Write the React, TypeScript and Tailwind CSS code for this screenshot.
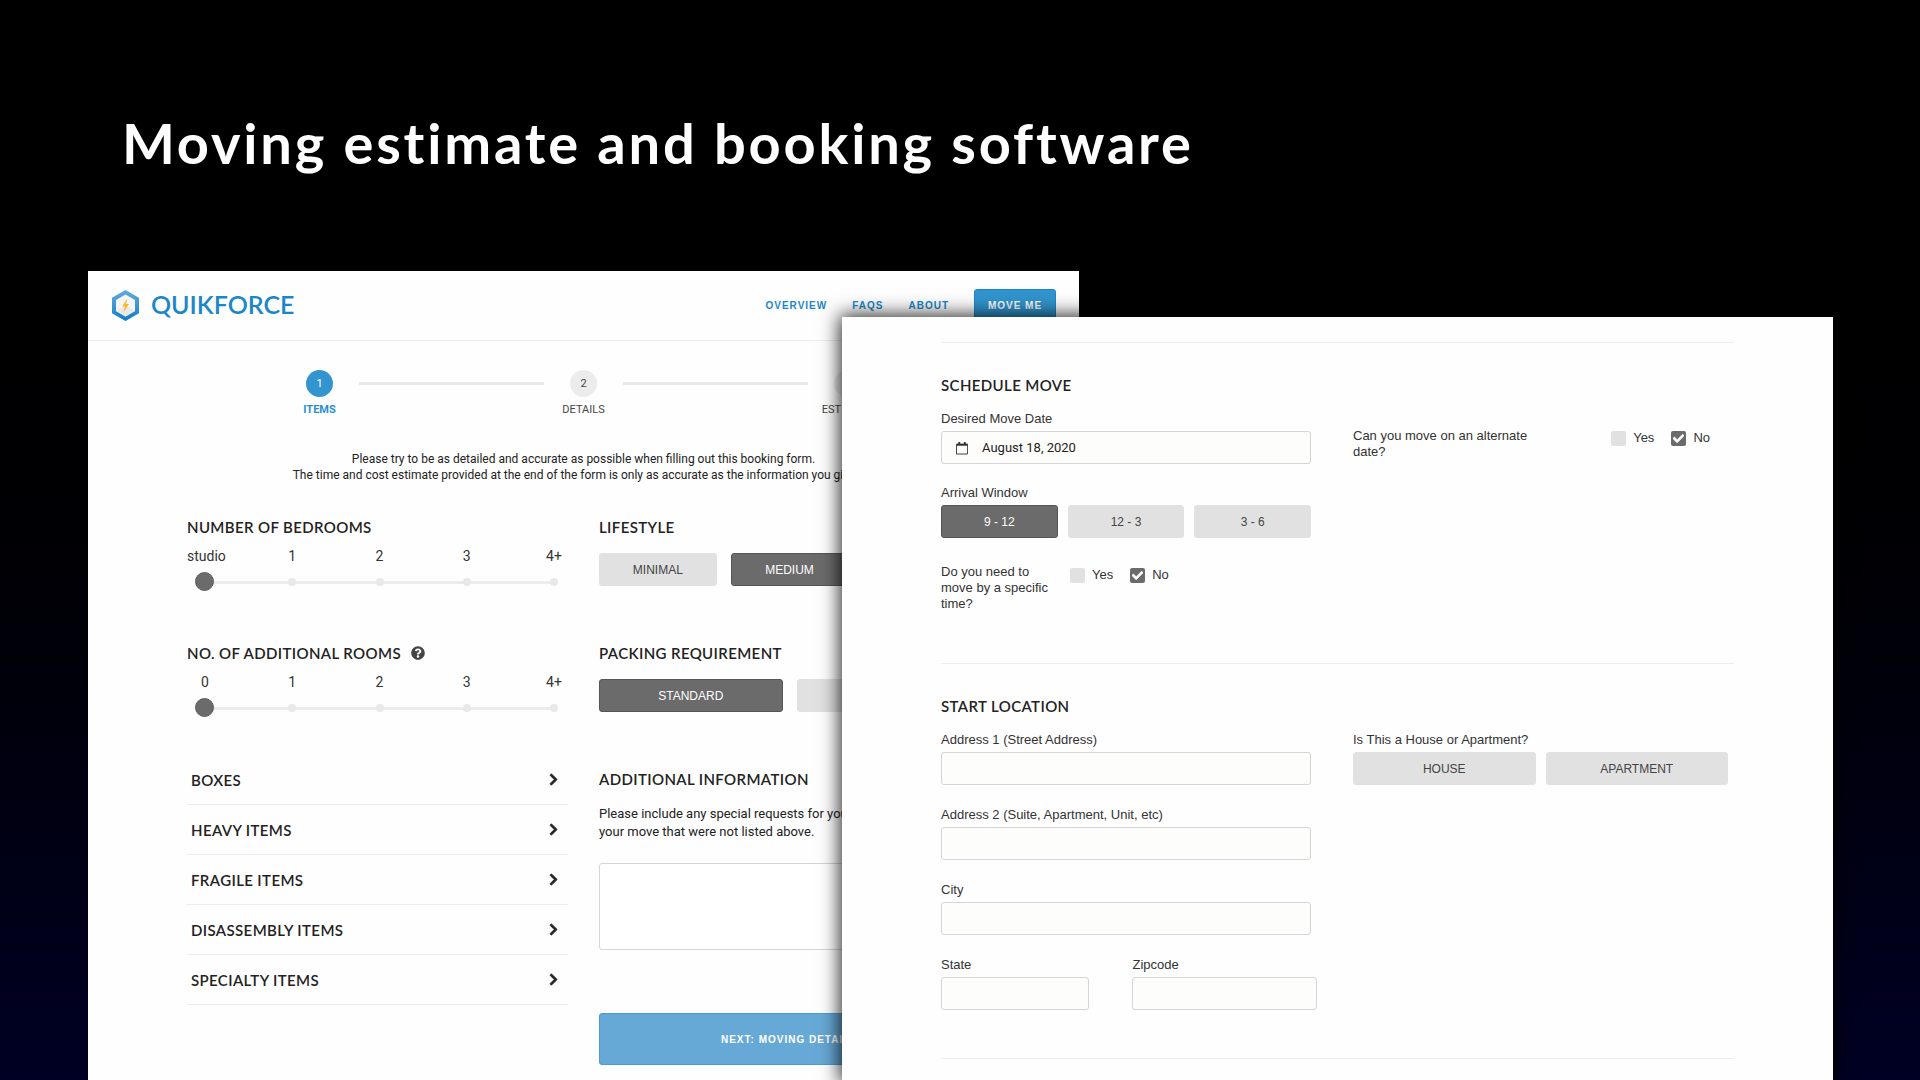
import { useId, useState } from "react";
import type { ReactNode } from "react";
import { FaChevronRight, FaQuestionCircle, FaCheck } from "react-icons/fa";

function Logo() {
  return (
    <a href="#" className="flex items-start gap-3 text-[#1b87c9]">
      <svg viewBox="0 0 54 62" className="h-[31px] w-[27px]" aria-hidden="true">
        <defs>
          <linearGradient id="hex" x1="0" y1="0" x2="0" y2="1">
            <stop offset="0" stopColor="#5fa9dc" />
            <stop offset="0.5" stopColor="#3f97d3" />
            <stop offset="1" stopColor="#0d7cc4" />
          </linearGradient>
        </defs>
        <path d="M27 0 54 15.500V46.500L27 62 0 46.500V15.500Z" fill="url(#hex)" />
        <path d="M27 9 46 20V42L27 53 8 42V20Z" fill="#f6f6f6" />
        <path d="M27 31 46 42 27 53 8 42Z" fill="#e9e9e9" />
        <path d="M31 17 20 33H26L23 45 34 28H28Z" fill="#fbb829" />
      </svg>
      <span className="font-[Lato,sans-serif] text-[25px] leading-7 font-semibold">QUIKFORCE</span>
    </a>
  );
}

function Heading({ children }: { children: ReactNode }) {
  return (
    <h2 className="flex items-center gap-2.5 font-[Lato,sans-serif] text-[15px] leading-5 font-semibold tracking-wide text-[#222]">
      {children}
    </h2>
  );
}

function Choices({ options, initial, label, className }: { options: string[]; initial?: string; label: string; className: string }) {
  const [picked, setPicked] = useState(initial);
  return (
    <div role="group" aria-label={label} className={className}>
      {options.map((o) => (
        <button
          key={o}
          type="button"
          aria-pressed={picked === o}
          onClick={() => setPicked(o)}
          className={
            "h-[33px] rounded-[3px] border text-xs font-['Liberation_Sans',Arial,sans-serif] " +
            (picked === o ? "border-[#555] bg-[#6b6b6b] text-white" : "border-[#e1e1e1] bg-[#e1e1e1] text-[#444]")
          }
        >
          {o}
        </button>
      ))}
    </div>
  );
}

function StepSlider({ title, labels, help }: { title: string; labels: string[]; help?: boolean }) {
  const id = useId();
  return (
    <section className="-mr-1">
      <Heading>
        <label htmlFor={id}>{title}</label>
        {help && (
          <button type="button" aria-label="Help" className="text-sm text-[#444]">
            <FaQuestionCircle />
          </button>
        )}
      </Heading>
      <div className="mt-[9px] flex justify-between text-sm leading-5 text-[#333]">
        {labels.map((l) => (
          <span key={l} className="w-9 text-center">
            {l}
          </span>
        ))}
      </div>
      <div className="relative mt-[5px] h-5 px-2">
        <div className="absolute inset-x-[18px] top-[10px] h-[3px] bg-[#ececec]" />
        <div className="absolute inset-x-[14px] top-[7px] flex justify-between">
          {labels.map((l) => (
            <span key={l} className="size-2 rounded-full bg-[#e8e8e8]" />
          ))}
        </div>
        <input
          id={id}
          type="range"
          min={0}
          max={labels.length - 1}
          defaultValue={0}
          className="relative block h-5 w-full appearance-none bg-transparent [&::-webkit-slider-thumb]:size-[19px] [&::-webkit-slider-thumb]:appearance-none [&::-webkit-slider-thumb]:rounded-full [&::-webkit-slider-thumb]:border [&::-webkit-slider-thumb]:border-[#5c5c5c] [&::-webkit-slider-thumb]:bg-[#6b6b6b]"
        />
      </div>
    </section>
  );
}

function Steps() {
  const steps = ["ITEMS", "DETAILS", "ESTIMATE"];
  return (
    <ol className="flex justify-center text-[11px] leading-4">
      {steps.map((s, i) => (
        <li key={s} className="flex">
          {i > 0 && <span className="mt-3 h-[3px] w-[185px] bg-[#e9e9e9]" />}
          <span className="flex w-[79px] flex-col items-center gap-[5px]">
            <span
              className={
                "flex size-[27px] items-center justify-center rounded-full " +
                (i === 0 ? "bg-[#3295cf] text-white" : "bg-[#ececec] text-[#444]")
              }
            >
              {i + 1}
            </span>
            <span className={i === 0 ? "font-bold text-[#2b8fce]" : "text-[#444]"}>{s}</span>
          </span>
        </li>
      ))}
    </ol>
  );
}

function ItemsPanel() {
  const items = ["BOXES", "HEAVY ITEMS", "FRAGILE ITEMS", "DISASSEMBLY ITEMS", "SPECIALTY ITEMS"];
  const info = useId();
  return (
    <div className="col-span-2 col-start-1 row-start-1 bg-[#fefefe] font-[Roboto,sans-serif]">
      <header className="flex h-[70px] items-center justify-between border-b border-[#ededed] pr-[23px] pl-6">
        <Logo />
        <nav className="flex items-center gap-[25px] text-[10px] font-bold tracking-widest text-[#1b87c9] font-['Liberation_Sans',Arial,sans-serif]">
          <a href="#">OVERVIEW</a>
          <a href="#">FAQS</a>
          <a href="#">ABOUT</a>
          <button type="button" className="h-[34px] w-[82px] rounded-[3px] border border-[#1b87c9] bg-[#3295cf] text-white">
            MOVE ME
          </button>
        </nav>
      </header>
      <div className="px-[99px] pt-[29px] pb-[15px]">
        <Steps />
        <p className="mt-[33px] text-center text-xs leading-4 text-[#222]">
          Please try to be as detailed and accurate as possible when filling out this booking form.
          <br />
          The time and cost estimate provided at the end of the form is only as accurate as the information you give us.
        </p>
        <div className="mt-[34px] grid grid-cols-2 gap-x-[31px]">
          <div>
            <div className="flex flex-col gap-[52px]">
              <StepSlider title="NUMBER OF BEDROOMS" labels={["studio", "1", "2", "3", "4+"]} />
              <StepSlider title="NO. OF ADDITIONAL ROOMS" labels={["0", "1", "2", "3", "4+"]} help />
            </div>
            <div className="mt-[38px]">
              {items.map((t) => (
                <button
                  key={t}
                  type="button"
                  className="flex h-[50px] w-full items-center justify-between border-b border-[#ededed] pr-2 pl-1"
                >
                  <Heading>{t}</Heading>
                  <FaChevronRight className="text-[13px] text-[#222]" stroke="currentColor" strokeWidth={36} />
                </button>
              ))}
            </div>
          </div>
          <div>
            <Heading>LIFESTYLE</Heading>
            <Choices label="Lifestyle" options={["MINIMAL", "MEDIUM", "MAXIMAL"]} initial="MEDIUM" className="mt-4 mb-[57px] grid grid-cols-3 gap-3.5" />
            <Heading>PACKING REQUIREMENT</Heading>
            <Choices label="Packing requirement" options={["STANDARD", "FULL SERVICE"]} initial="STANDARD" className="mt-4 mb-[57px] grid grid-cols-2 gap-3.5" />
            <Heading>
              <label htmlFor={info}>ADDITIONAL INFORMATION</label>
            </Heading>
            <p className="mt-4 text-[13px] leading-[18px] text-[#222]">
              Please include any special requests for your move or items in
              <br />
              your move that were not listed above.
            </p>
            <textarea id={info} className="mt-[22px] block h-[87px] w-full resize-none rounded-[3px] border border-[#d5d5d5] bg-white p-2 text-[13px]" />
            <button
              type="button"
              className="mt-[63px] h-[52px] w-full rounded-[3px] border border-[#4a9bd3] bg-[#67a9d6] text-[10px] font-bold tracking-widest text-white font-['Liberation_Sans',Arial,sans-serif]"
            >
              NEXT: MOVING DETAILS
            </button>
          </div>
        </div>
      </div>
    </div>
  );
}

function YesNo({ label, className }: { label: string; className: string }) {
  const [value, setValue] = useState("No");
  return (
    <div role="group" aria-label={label} className={className}>
      {["Yes", "No"].map((o) => (
        <label key={o} className="flex items-center gap-[7px]">
          <span className="grid">
            <input
              type="checkbox"
              checked={value === o}
              onChange={() => setValue(o)}
              className="col-start-1 row-start-1 size-[15px] appearance-none rounded-[2px] bg-[#e1e1e1] checked:bg-[#6b6b6b]"
            />
            {value === o && (
              <FaCheck
                className="pointer-events-none col-start-1 row-start-1 place-self-center text-[11px] text-white"
                stroke="currentColor"
                strokeWidth={30}
              />
            )}
          </span>
          {o}
        </label>
      ))}
    </div>
  );
}

function Field({ label }: { label: string }) {
  return (
    <label className="flex flex-col gap-1">
      {label}
      <input type="text" className="h-[33px] w-full rounded-[3px] border border-[#d5d5d5] bg-[#fdfdfb] px-3" />
    </label>
  );
}

function SchedulePanel() {
  const date = useId();
  return (
    <div className="relative col-span-2 col-start-2 row-start-1 mt-[46px] bg-[#fefefe] px-[99px] pt-[25px] pb-[22px] text-[13px] leading-4 text-[#333] shadow-[0_0_18px_2px_rgba(0,0,0,0.85)] font-['Liberation_Sans',Arial,sans-serif]">
      <section className="border-t border-[#ededed] pt-8">
        <Heading>SCHEDULE MOVE</Heading>
        <div className="mt-4 grid grid-cols-[370fr_381fr] gap-x-[42px]">
          <div>
            <label htmlFor={date}>Desired Move Date</label>
            <div className="mt-1 flex h-[33px] items-center gap-3.5 rounded-[3px] border border-[#d5d5d5] bg-[#fdfdfb] pl-3.5">
              <svg viewBox="0 0 13 14" className="h-3.5 w-[13px]" aria-hidden="true">
                <path d="M0.500 3H12.500V13.500H0.500Z" fill="none" stroke="#333" />
                <path d="M0.500 2.500H12.500V4.500H0.500ZM2.500 0.500H4.500V3H2.500ZM8.500 0.500H10.500V3H8.500Z" fill="#333" />
              </svg>
              <input id={date} type="text" defaultValue="August 18, 2020" className="w-full bg-transparent font-[Roboto,sans-serif] text-[13px] text-[#222]" />
            </div>
            <p className="mt-[21px] mb-1">Arrival Window</p>
            <Choices label="Arrival Window" options={["9 - 12", "12 - 3", "3 - 6"]} initial="9 - 12" className="grid grid-cols-3 gap-2.5" />
            <div className="mt-[26px] flex gap-3">
              <p className="w-[117px]">Do you need to move by a specific time?</p>
              <YesNo label="Specific time" className="mt-[3px] flex items-center gap-[17px] self-start" />
            </div>
          </div>
          <div className="flex justify-between pt-3.5 pr-6">
            <p className="w-[190px] pt-[3px]">Can you move on an alternate date?</p>
            <YesNo label="Alternate date" className="mt-[5px] flex items-center gap-[17px] self-start" />
          </div>
        </div>
      </section>
      <section className="mt-[51px] border-y border-[#ededed] pt-8 pb-12">
        <Heading>START LOCATION</Heading>
        <div className="mt-4 grid grid-cols-[370fr_381fr] gap-x-[42px]">
          <div className="flex flex-col gap-[22px]">
            <Field label="Address 1 (Street Address)" />
            <Field label="Address 2 (Suite, Apartment, Unit, etc)" />
            <Field label="City" />
            <div className="-mr-1.5 grid grid-cols-[148fr_184fr] gap-[43px]">
              <Field label="State" />
              <Field label="Zipcode" />
            </div>
          </div>
          <div className="pr-1.5">
            <p className="mb-1">Is This a House or Apartment?</p>
            <Choices label="House or apartment" options={["HOUSE", "APARTMENT"]} className="grid grid-cols-2 gap-2.5" />
          </div>
        </div>
      </section>
    </div>
  );
}

export default function App() {
  return (
    <main className="flex min-h-screen flex-col bg-linear-to-b from-black via-[#000004] to-[#000024] pr-[87px] pl-[88px]">
      <h1 className="px-[34px] pt-[107px] pb-[92px] font-[Lato,sans-serif] text-[56px] leading-[72px] font-bold tracking-wider text-white">
        Moving estimate and booking software
      </h1>
      <div className="grid flex-1 grid-cols-[754fr_237fr_754fr]">
        <ItemsPanel />
        <SchedulePanel />
      </div>
    </main>
  );
}
